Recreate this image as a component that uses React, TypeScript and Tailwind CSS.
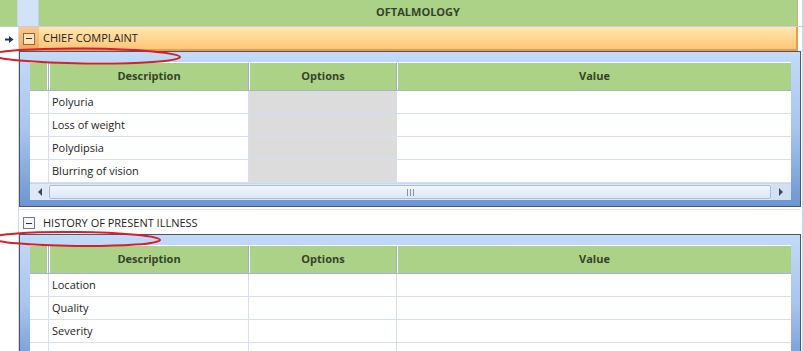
import React from 'react';

// Строки деталей для каждой группы
const chiefRows = ['Polyuria', 'Loss of weight', 'Polydipsia', 'Blurring of vision'];
const historyRows = ['Location', 'Quality', 'Severity', ''];

function MinusBox({ orange }: { orange?: boolean }) {
  return (
    <div
      className={`w-[12px] h-[12px] border flex items-center justify-center ${
        orange ? 'border-[#8a6a45] bg-[#fde3b8]' : 'border-[#6d7b8f] bg-[#f4f7fb]'
      }`}
    >
      <div className="w-[6px] h-[1px] bg-[#333]" />
    </div>
  );
}

function DetailHeader() {
  return (
    <div className="flex h-[29px] bg-[#acd287] border-b border-[#a3b5cd] border-t border-t-white">
      <div className="w-[19px] border-r border-[#9fb0c6] shadow-[inset_-1px_0_0_#fff]" />
      <div className="w-[200px] border-r border-[#9fb0c6] border-l border-l-white flex items-center justify-center font-bold text-[#36432c]">
        Description
      </div>
      <div className="w-[148px] border-r border-[#9fb0c6] border-l border-l-white flex items-center justify-center font-bold text-[#36432c]">
        Options
      </div>
      <div className="flex-1 border-l border-l-white flex items-center justify-center font-bold text-[#36432c]">
        Value
      </div>
    </div>
  );
}

function DetailRow({ label, gray }: { label: string; gray?: boolean }) {
  return (
    <div className="flex h-[23px] border-b border-[#d5dfee] bg-white">
      <div className="w-[19px] border-r border-[#d5dfee]" />
      <div className="w-[200px] border-r border-[#d5dfee] flex items-center pl-[3px] text-[#1e1e1e]">{label}</div>
      <div className={`w-[148px] border-r border-[#d5dfee] ${gray ? 'bg-[#dcdcdc]' : ''}`} />
      <div className="flex-1" />
    </div>
  );
}

function HScrollBar() {
  return (
    <div className="flex h-[17px] bg-[#dfe9f6] border-t border-[#c9d7ea]">
      <div className="w-[19px] flex items-center justify-center">
        <div className="w-0 h-0 border-y-[4px] border-y-transparent border-r-[4px] border-r-[#3a4a60]" />
      </div>
      <div className="flex-1 my-[1px] rounded-[2px] border border-[#aabdd8] bg-gradient-to-b from-[#f1f6fc] to-[#dde8f6] flex items-center justify-center">
        <div className="flex gap-[2px]">
          <div className="w-[1px] h-[7px] bg-[#8091aa]" />
          <div className="w-[1px] h-[7px] bg-[#8091aa]" />
          <div className="w-[1px] h-[7px] bg-[#8091aa]" />
        </div>
      </div>
      <div className="w-[20px] flex items-center justify-center bg-[#d3e0f1]">
        <div className="w-0 h-0 border-y-[4px] border-y-transparent border-l-[4px] border-l-[#3a4a60]" />
      </div>
    </div>
  );
}

function DetailPanel({ rows, grayOptions, scroll }: { rows: string[]; grayOptions?: boolean; scroll?: boolean }) {
  return (
    <div className="flex">
      <div className="w-[19px] shrink-0 border-r border-[#d5dce6]" />
      <div className="w-[782px] border border-[#4a5566] bg-gradient-to-b from-[#c3daf8] via-[#a9c5ee] to-[#6d95d1] pt-[10px] pl-[10px] pr-[9px] pb-[6px]">
        <div className="bg-white">
          <DetailHeader />
          {rows.map((r, i) => (
            <DetailRow key={i} label={r} gray={grayOptions} />
          ))}
          {scroll && <HScrollBar />}
        </div>
      </div>
      <div className="flex-1 border-r border-[#c9d9ee]" />
    </div>
  );
}

export default function App() {
  return (
    <div
      className="relative w-[803px] h-[351px] overflow-hidden bg-white text-[11px]"
      style={{ fontFamily: '"Open Sans", "Noto Sans", sans-serif' }}
    >
      {/* Заголовок */}
      <div className="flex h-[27px] border-b border-[#c0cfe2]">
        <div className="w-[18px] bg-[#acd287] border-r border-[#c9d6e6]" />
        <div className="w-[21px] bg-[#d3e3f7] border-r border-[#bcd0ea]" />
        <div className="w-[759px] bg-[#acd287] border-r border-[#c6ad8a] flex items-center justify-center font-bold text-[#36432c] text-[11px] pb-[1px]">
          OFTALMOLOGY
        </div>
        <div className="flex-1 border-r border-[#c9d9ee]" />
      </div>

      {/* CHIEF COMPLAINT */}
      <div className="flex h-[24px]">
        <div className="w-[19px] flex items-center justify-center border-r border-[#d5dce6]">
          <svg width="9" height="9" viewBox="0 0 9 9">
            <path d="M0 3.5h4V1l4.5 3.5L4 8V5.5H0z" fill="#1d3557" />
          </svg>
        </div>
        <div className="w-[20px] bg-gradient-to-b from-[#fcc98a] to-[#f4a65a] flex items-center justify-center border-b border-[#e8954a]">
          <MinusBox orange />
        </div>
        <div className="w-[759px] bg-gradient-to-b from-[#ffe7b0] to-[#ffc677] border-r-2 border-b-2 border-[#ec9a4e] flex items-center pl-[4px] text-[#1e1e1e]">
          CHIEF COMPLAINT
        </div>
        <div className="flex-1 border-r border-[#c9d9ee]" />
      </div>

      <DetailPanel rows={chiefRows} grayOptions scroll />

      {/* HISTORY OF PRESENT ILLNESS */}
      <div className="flex h-[27px]">
        <div className="w-[19px] border-r border-[#d5dce6]" />
        <div className="flex-1 flex mt-[2px] pt-[2px] border-t border-[#dfe5ee]">
          <div className="w-[20px] flex items-center justify-center">
            <MinusBox />
          </div>
          <div className="flex items-center pl-[4px] text-[#1e1e1e]">HISTORY OF PRESENT ILLNESS</div>
        </div>
        <div className="w-[2px] border-r border-[#c9d9ee]" />
      </div>

      <DetailPanel rows={historyRows} />

      {/* Красные пометки */}
      <svg className="absolute left-0 top-0 pointer-events-none" width="803" height="351">
        <ellipse cx="86" cy="56" rx="94" ry="7.5" fill="none" stroke="#d3202b" strokeWidth="2" transform="rotate(0.6 86 56)" />
        <ellipse cx="76" cy="239" rx="84" ry="7" fill="none" stroke="#d3202b" strokeWidth="2" transform="rotate(0.6 76 239)" />
      </svg>
    </div>
  );
}
